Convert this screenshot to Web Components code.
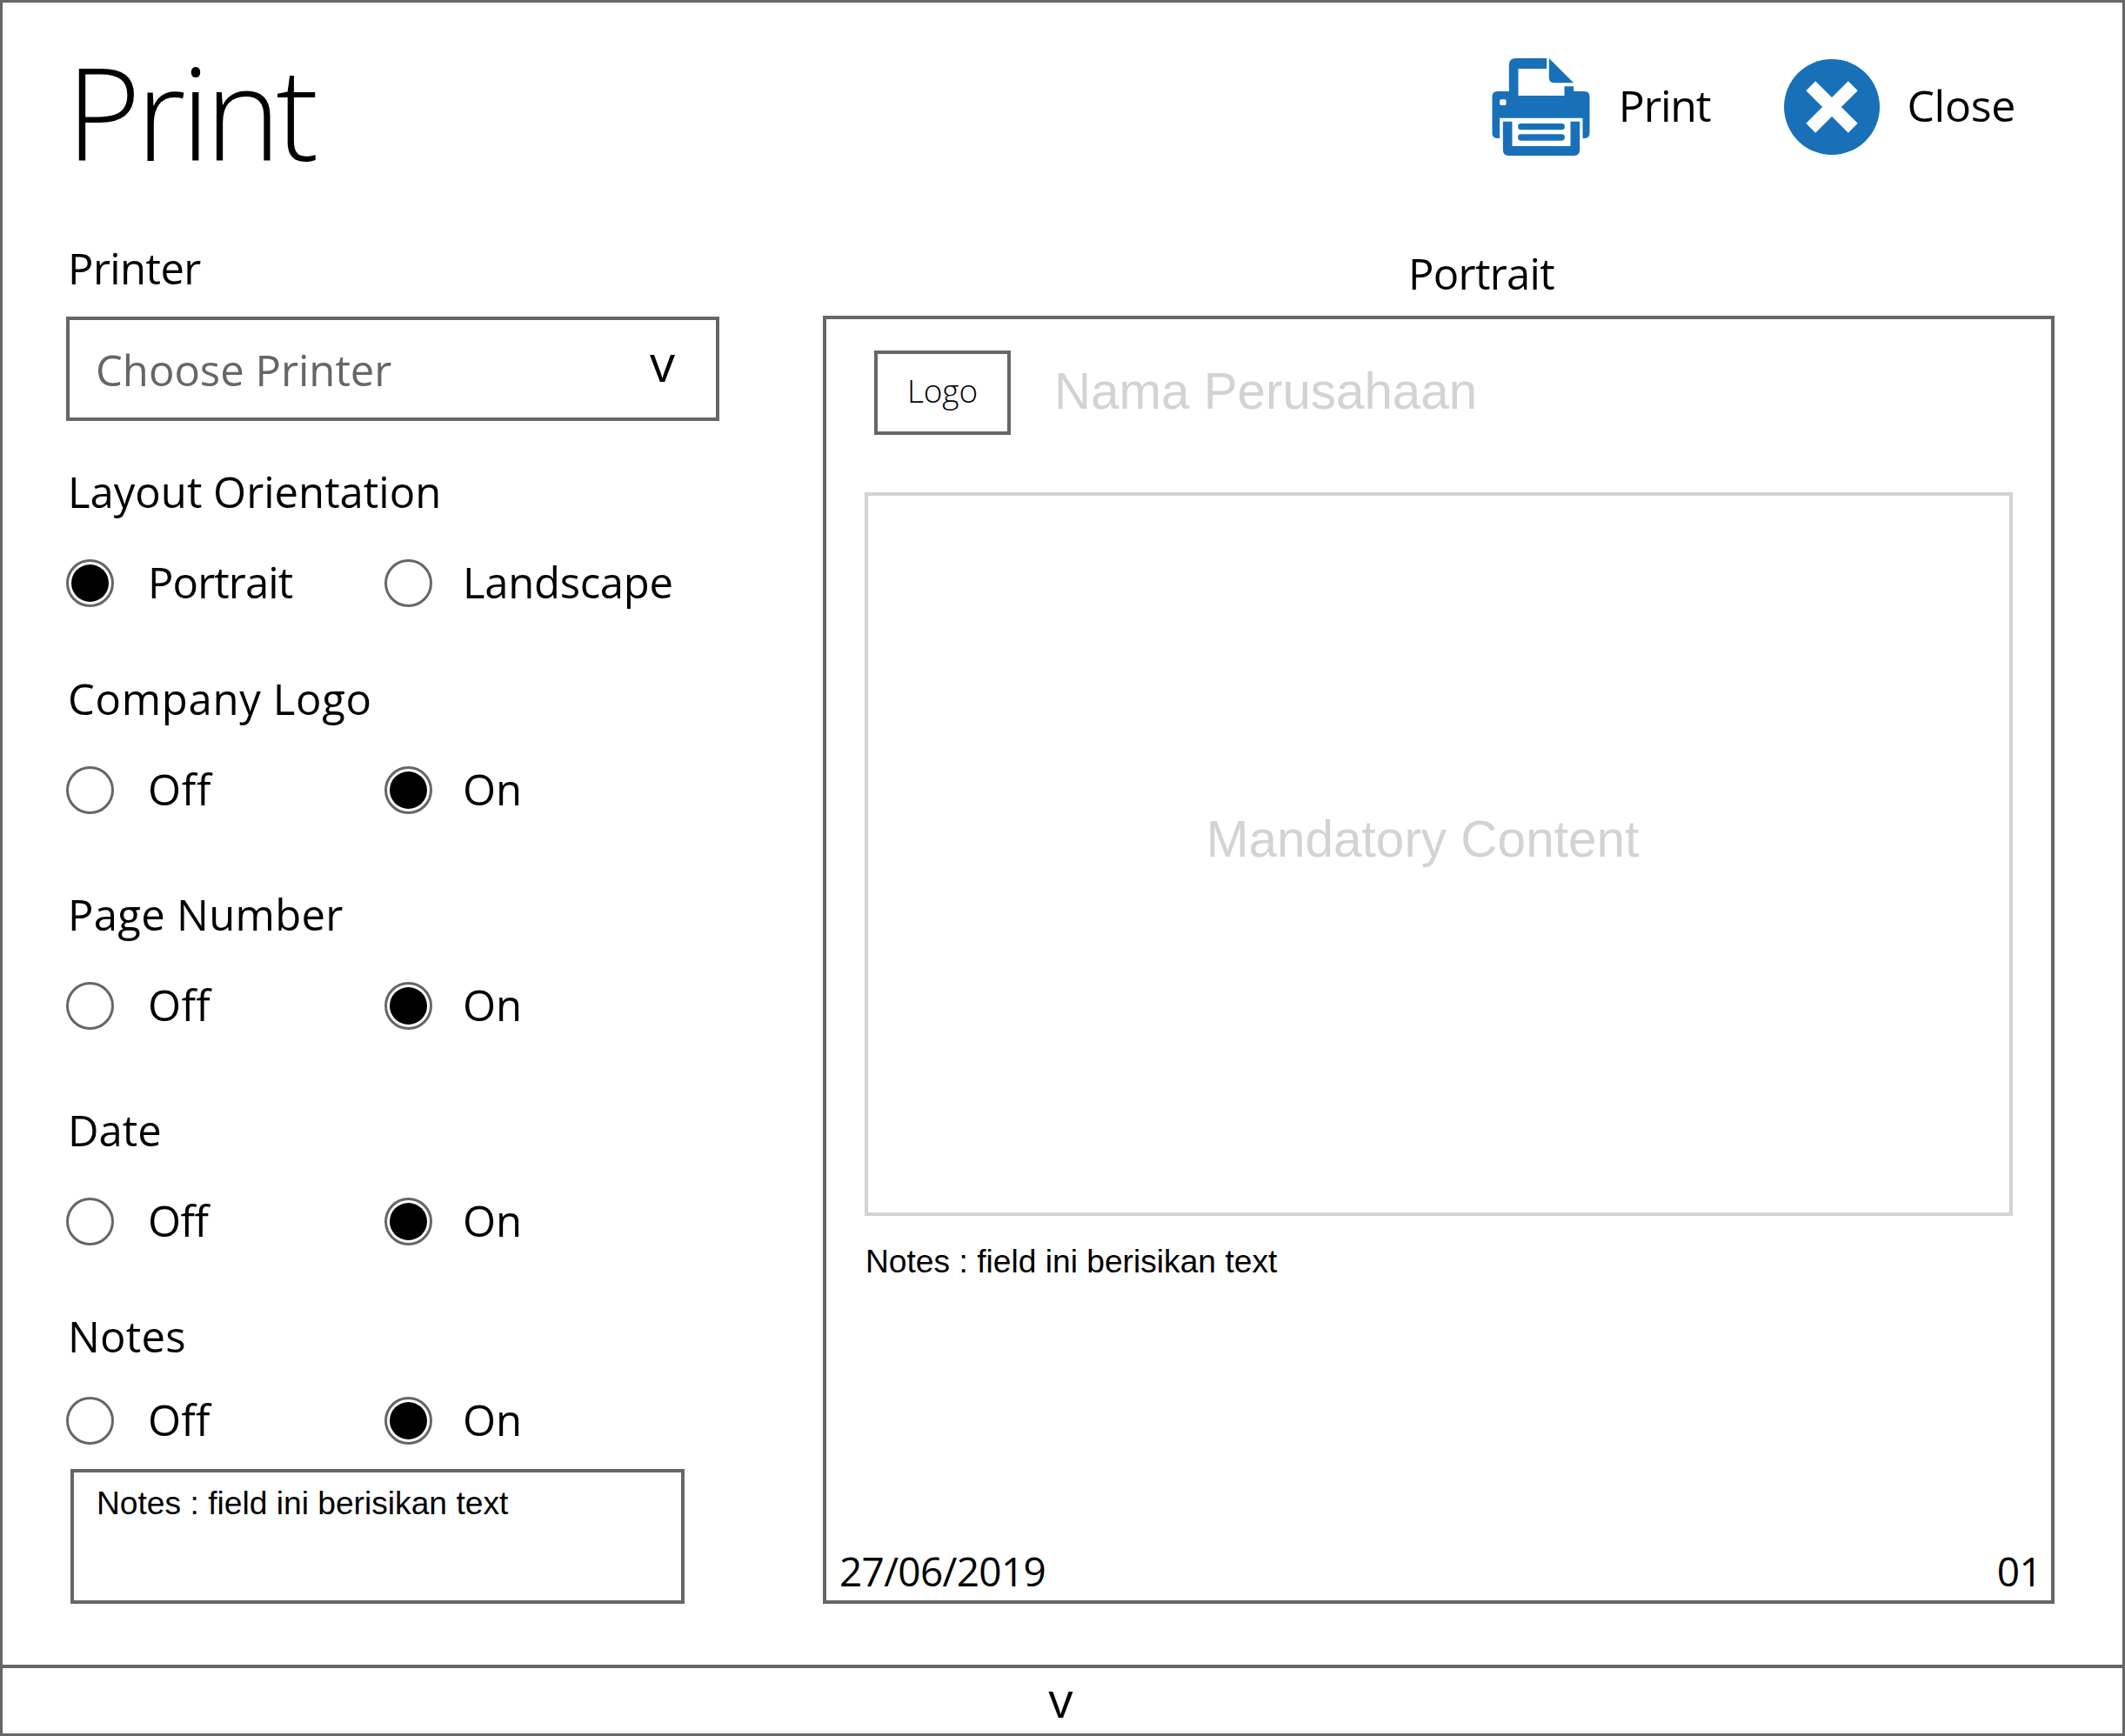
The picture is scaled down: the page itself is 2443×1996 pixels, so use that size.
<!DOCTYPE html>
<html><head><meta charset="utf-8"><title>Print</title>
<style>html,body{margin:0;background:#fff;color:#000}body{font-family:"Open Sans","Noto Sans",sans-serif}</style></head>
<body>
<print-app>
  <print-header slot="header">
    <print-action label="Print" style="--gap:33px;--ls:-1.2px">
      <svg slot="icon" width="113" height="112" viewBox="44 52 336 336"><path fill="#1870b9" d="M102 166V75q0-23 23-23H232V88H134V181H293V149H325V166H362q18 0 18 19V310q0 18-20 18H356V258H70V328H64q-20 0-20-18V185q0-19 18-19Z"/><path fill="#1870b9" d="M240 52 325 137H258q-18 0-18-18Z"/><path fill="#1870b9" d="M81 270H113V355H314V270H346V368q0 20-20 20H101q-20 0-20-20Z"/><rect x="133" y="277" width="161" height="22" rx="10" fill="#1870b9"/><rect x="133" y="314" width="161" height="22" rx="10" fill="#1870b9"/><rect x="70" y="194" width="22" height="20" rx="5" fill="#fff"/></svg>
    </print-action>
    <print-action label="Close" style="--gap:31px;--ls:-.3px;margin-left:85px">
      <svg slot="icon" width="110" height="110" viewBox="0 0 111 111"><circle cx="55.5" cy="55.5" r="55.5" fill="#1870b9"/><path fill="#fff" d="M55.5 44.5 74.5 25.5 85.5 36.5 66.5 55.5 85.5 74.5 74.5 85.5 55.5 66.5 36.5 85.5 25.5 74.5 44.5 55.5 25.5 36.5 36.5 25.5Z"/></svg>
    </print-action>
  </print-header>
  <print-settings slot="left">
    <print-field label="Printer" style="--top:0px;--inner:26px;--ls:-.6px"><print-select>Choose Printer</print-select></print-field>
    <print-field label="Layout Orientation" style="--top:51px;--inner:47px">
      <print-options><print-radio checked style="--ls:-.9px">Portrait</print-radio><print-radio style="--ls:-.3px">Landscape</print-radio></print-options></print-field>
    <print-field label="Company Logo" style="--top:75px;--inner:47px;--ls:.7px">
      <print-options><print-radio>Off</print-radio><print-radio checked style="--ls:0px">On</print-radio></print-options></print-field>
    <print-field label="Page Number" style="--top:85px;--inner:47px;--ls:.3px">
      <print-options><print-radio>Off</print-radio><print-radio checked style="--ls:0px">On</print-radio></print-options></print-field>
    <print-field label="Date" style="--top:85px;--inner:47px">
      <print-options><print-radio>Off</print-radio><print-radio checked style="--ls:0px">On</print-radio></print-options></print-field>
    <print-field label="Notes" style="--top:74px;--inner:39px;--ls:.2px">
      <print-options><print-radio>Off</print-radio><print-radio checked style="--ls:0px">On</print-radio></print-options></print-field>
    <print-notes>Notes : field ini berisikan text</print-notes>
  </print-settings>
  <print-preview slot="right" title-text="Portrait"></print-preview>
</print-app>
<script>
function def(name, html, init){
  customElements.define(name, class extends HTMLElement{
    constructor(){super();const r=this.attachShadow({mode:'open'});r.innerHTML=typeof html==='function'?html(this):html;}
    connectedCallback(){ if(init) init(this); }
  });
}
const OS='"Open Sans","Noto Sans",sans-serif', AR='"Liberation Sans",Arial,sans-serif';
def('print-app',`<style>
:host{display:flex;flex-direction:column;width:2443px;height:1996px;box-sizing:border-box;border:3px solid #666}
.main{flex:1;min-height:0;display:flex;flex-direction:column}
.cols{display:flex;padding-left:73px;gap:119px}
.bar{height:75px;border-top:4px solid #666;display:flex;justify-content:center;align-items:center;font:400 56px/60px ${OS}}
.bar span{padding:0 4px 6px 0}
</style><div class="main"><slot name="header"></slot><div class="cols"><slot name="left"></slot><slot name="right"></slot></div></div><div class="bar"><span>v</span></div>`);
def('print-header',`<style>
:host{display:flex;height:275px;box-sizing:border-box;padding:64px 123px 0 73px;align-items:flex-start}
h1{margin:-39px 0 0 0;font:300 147px/200px ${OS};letter-spacing:-5.5px}
.a{margin-left:auto;display:flex;align-items:center}
</style><h1>Print</h1><div class="a"><slot></slot></div>`);
def('print-action',t=>`<style>
:host{display:flex;align-items:center;gap:var(--gap)}
span{font:400 50px/60px ${OS};letter-spacing:var(--ls);padding-bottom:4px}
slot{display:block;line-height:0}
</style><slot name="icon"></slot><span>${t.getAttribute('label')}</span>`);
def('print-settings',`<style>:host{display:block;width:751px}</style><slot></slot>`);
def('print-field',t=>`<style>
:host{display:block;margin-top:var(--top)}
.l{font:400 49px/60px ${OS};letter-spacing:var(--ls,0px);margin:0 0 var(--inner) 2px}
</style><div class="l">${t.getAttribute('label')}</div><slot></slot>`);
def('print-select',`<style>
:host{display:flex;align-items:center;justify-content:space-between;height:120px;box-sizing:border-box;border:4px solid #666;padding:0 47px 0 30px;font:400 49px/60px ${OS};letter-spacing:0}
.t{color:#666;padding-top:2px}.v{color:#000;font-size:58px;padding-bottom:14px}
</style><span class="t"><slot></slot></span><span class="v">v</span>`);
def('print-options',`<style>:host{display:flex;height:56px}::slotted(print-radio){width:366px}::slotted(print-radio:last-child){--g:35px}</style><slot></slot>`);
def('print-radio',t=>`<style>
:host{display:flex;align-items:center;gap:var(--g,39px);font:400 49px/56px ${OS};letter-spacing:var(--ls,-.5px)}
i{flex:none;width:55px;height:55px;box-sizing:border-box;border:3px solid #666;border-radius:50%;display:grid;place-items:center;background:#fff}
b{width:43px;height:43px;border-radius:50%;background:#000;display:${t.hasAttribute('checked')?'block':'none'}}
span{padding-bottom:2px}
</style><i><b></b></i><span><slot></slot></span>`);
def('print-notes',`<style>
:host{display:block;margin:28px 40px 0 5px;height:155px;box-sizing:border-box;border:4px solid #666;padding:13px 0 0 26px;font:400 37.2px/44px ${AR}}
</style><slot></slot>`);
def('print-preview',t=>`<style>
:host{display:block;width:1416px}
.h{height:79px;margin:6px 0 0;text-align:center;font:400 49px/60px ${OS};letter-spacing:-.7px;padding-left:98px;box-sizing:border-box}
.p{height:1481px;box-sizing:border-box;border:4px solid #666;padding:36px 44px 4px 44px;display:flex;flex-direction:column}
.r{display:flex;align-items:center;padding-left:11px}
.logo{width:157px;height:97px;box-sizing:border-box;border:4px solid #666;display:grid;place-items:center;font:300 37px/44px ${OS};letter-spacing:-.2px;padding-bottom:5px}
.n{margin-left:50px;font:400 58.3px/70px ${AR};color:#d1d3d4;padding-bottom:3px}
.c{margin-top:66px;height:832px;box-sizing:border-box;border:4px solid #d1d3d4;display:flex;align-items:center;justify-content:center;padding:0 37px 35px 0;font:400 58.5px/70px ${AR};color:#d1d3d4}
.o{margin:30px 0 0 1px;font:400 37.2px/44px ${AR}}
.f{margin:auto -33px 0 -29px;display:flex;justify-content:space-between;font:400 46px/60px ${OS};letter-spacing:-.7px}
</style><div class="h">${t.getAttribute('title-text')}</div>
<div class="p"><div class="r"><div class="logo">Logo</div><div class="n">Nama Perusahaan</div></div>
<div class="c">Mandatory Content</div><div class="o">Notes : field ini berisikan text</div>
<div class="f"><span>27/06/2019</span><span>01</span></div></div>`);
</script>
</body></html>
